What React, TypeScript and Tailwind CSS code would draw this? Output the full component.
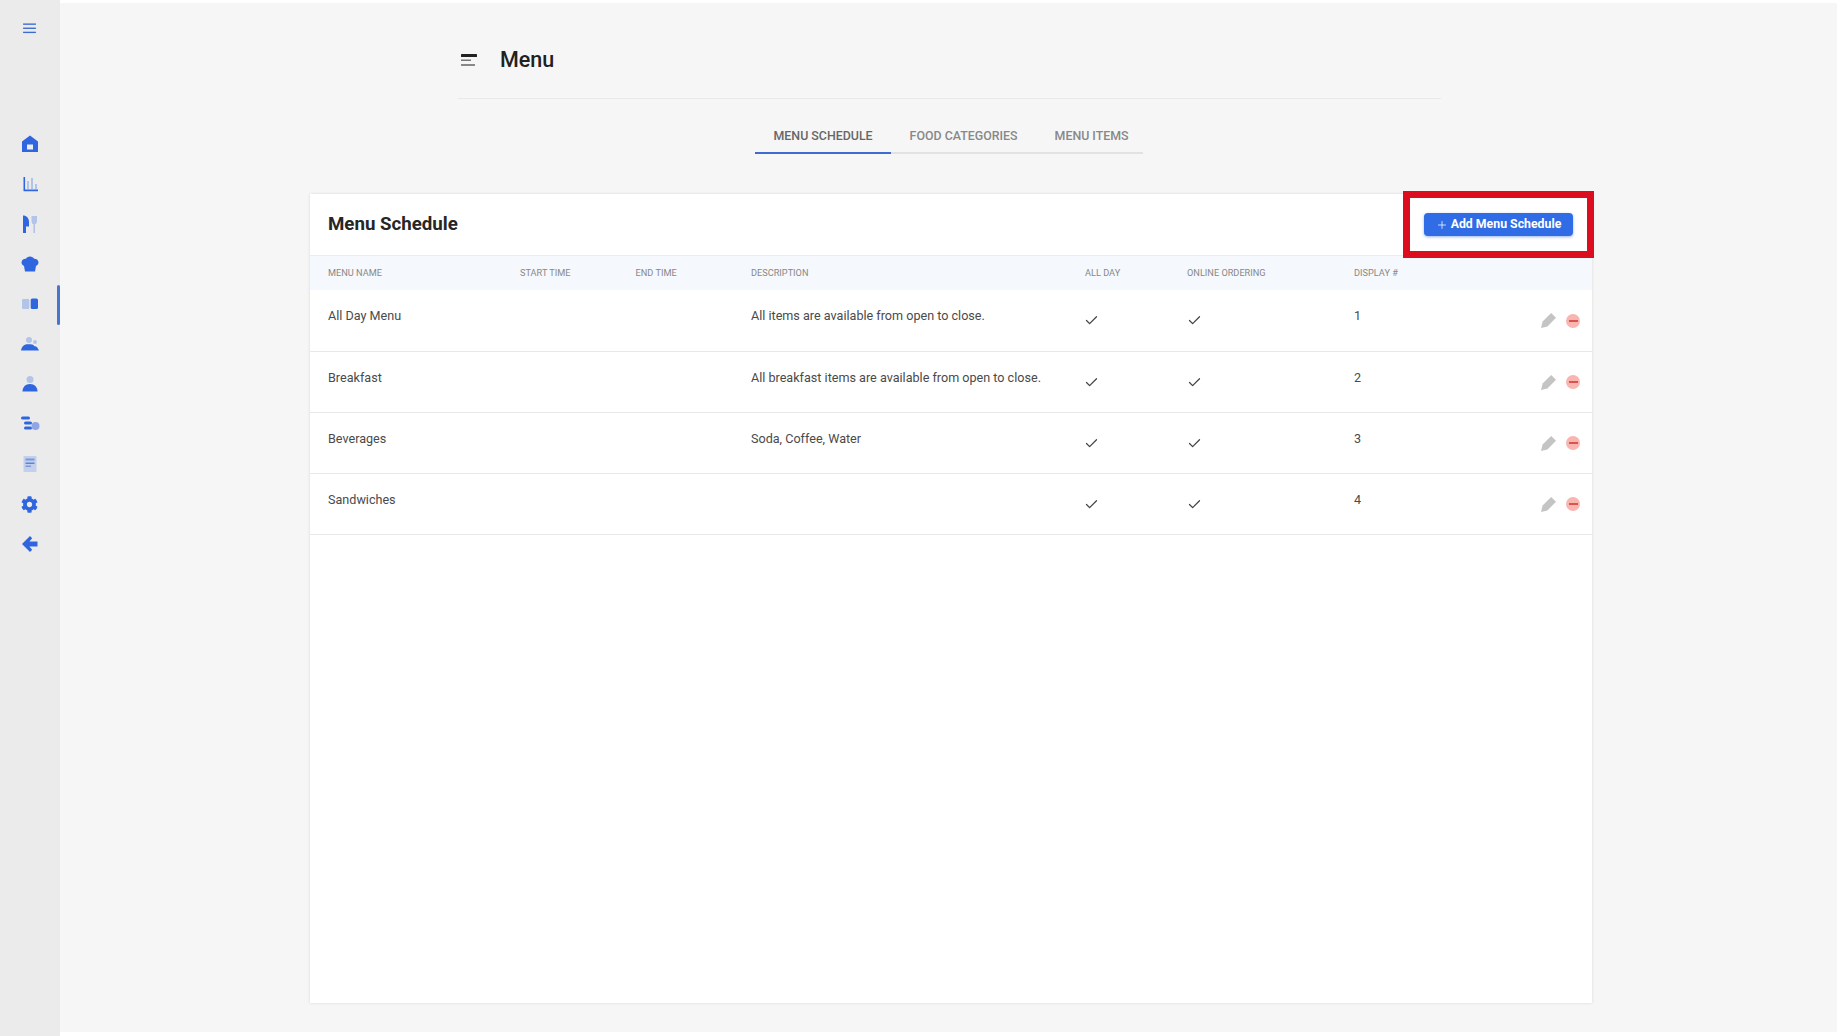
import { Plus, Check } from "lucide-react";
import { FaCog } from "react-icons/fa";

const blue = "#2f66e0";
const pale = "#b4c4e8";

const navIcons = [
  // home
  <svg key="home" viewBox="0 0 20 20" className="h-5 w-5">
    <path fill={blue} d="M10 1.500 2 7.500V18h16V7.500z" />
    <rect x="7" y="10.500" width="6" height="5" fill="#e9edf6" />
  </svg>,
  // chart
  <svg key="chart" viewBox="0 0 20 20" className="h-5 w-5">
    <path fill={pale} d="M7 7h2v8H7zM11 4h2v11h-2zM15 10h2v5h-2z" />
    <path fill={blue} d="M3.500 3h1.600v12.600H18v1.600H3.500z" />
  </svg>,
  // fork and knife
  <svg key="fork" viewBox="0 0 20 20" className="h-5 w-5">
    <path fill={blue} d="M3 1.500c3.500 0 6 2.500 6 6.500v4.500H6V19H3z" />
    <path fill={pale} d="M11.500 2h5.500v5c0 1.800-1 3-2 3.300V19h-1.600v-8.700c-1-.3-1.900-1.500-1.900-3.300z" />
  </svg>,
  // chef hat
  <svg key="hat" viewBox="0 0 20 20" className="h-5 w-5">
    <path fill={blue} d="M10 2.500c2 0 3.400 1 4 2.200 2.400-.2 4.500 1.300 4.500 3.600 0 1.700-1 3-2.500 3.600L15 17.500H5L4 12C2.500 11.300 1.500 10 1.500 8.300 1.500 6 3.600 4.500 6 4.700 6.600 3.500 8 2.500 10 2.500z" />
  </svg>,
  // open menu book
  <svg key="book" viewBox="0 0 20 20" className="h-5 w-5">
    <rect x="2" y="5" width="7.300" height="10" rx="1" fill={pale} />
    <rect x="10.700" y="4.500" width="7.300" height="10.500" rx="1.500" fill={blue} />
  </svg>,
  // group of people
  <svg key="group" viewBox="0 0 20 20" className="h-5 w-5">
    <circle cx="9" cy="6" r="3" fill={pale} />
    <circle cx="15" cy="8" r="2" fill={pale} />
    <path fill={blue} d="M1 16.500c.6-3.600 2.900-6.300 6.500-6.300h3c2 0 3.300.8 4 2 1.800-.4 3.500 1.600 4.500 4.300z" />
  </svg>,
  // person
  <svg key="person" viewBox="0 0 20 20" className="h-5 w-5">
    <circle cx="10" cy="5.500" r="3.500" fill={pale} />
    <path fill={blue} d="M2.500 17.500c0-4.400 3-7.500 7.500-7.500s7.500 3.100 7.500 7.500z" />
  </svg>,
  // list with badge
  <svg key="list" viewBox="0 0 20 20" className="h-5 w-5">
    <rect x="1" y="2.500" width="9" height="3" rx="1.500" fill={blue} />
    <rect x="4" y="7.500" width="8" height="3" rx="1.500" fill={blue} />
    <rect x="4" y="12.500" width="8" height="3" rx="1.500" fill={blue} />
    <circle cx="15.500" cy="12" r="4" fill="#8ea6e4" />
  </svg>,
  // document
  <svg key="doc" viewBox="0 0 20 20" className="h-5 w-5">
    <rect x="3.500" y="2" width="13" height="16" rx="1" fill="#c3d0ec" />
    <rect x="5.500" y="4.500" width="9" height="2" fill="#7d97d8" />
    <rect x="5.500" y="8.500" width="9" height="1.500" fill="#5f82d6" />
    <rect x="5.500" y="11.500" width="5.500" height="1.500" fill="#7d97d8" />
  </svg>,
  // gear
  <FaCog key="gear" className="h-[17px] w-[17px] text-[#2f66e0]" />,
  // back arrow
  <svg key="back" viewBox="0 0 20 20" className="h-5 w-5">
    <path fill={blue} d="M10 2 2 10l8 8 2.200-2.200-2.800-3.300h8.100v-5H9.400l2.800-3.300z" />
  </svg>,
];

const rows = [
  { name: "All Day Menu", description: "All items are available from open to close.", display: 1 },
  { name: "Breakfast", description: "All breakfast items are available from open to close.", display: 2 },
  { name: "Beverages", description: "Soda, Coffee, Water", display: 3 },
  { name: "Sandwiches", description: "", display: 4 },
];

const headers = ["Menu Name", "Start Time", "End Time", "Description", "All Day", "Online Ordering", "Display #", ""];

export default function App() {
  return (
    <div className="flex h-[1036px] w-[1840px] overflow-hidden bg-white font-['Roboto',sans-serif]">
      <aside className="flex h-full w-[60px] shrink-0 flex-col items-center bg-[#ebebeb] pr-[1px]">
        <button className="mt-[18px] mb-[86px] flex h-5 w-5 items-center justify-center">
          <svg viewBox="0 0 14 12" className="h-[11px] w-[13px]" fill="#3d6bd1">
            <rect y="0.500" width="14" height="1.500" />
            <rect y="5" width="14" height="1.500" />
            <rect y="9.500" width="14" height="1.500" />
          </svg>
        </button>
        {navIcons.map((icon, i) => (
          <div key={i} className="relative flex h-10 w-full items-center justify-center">
            {icon}
            {i === 4 && <span className="absolute top-[1px] -right-[1px] h-10 w-[3px] rounded-full bg-[#4a74d0]" />}
          </div>
        ))}
      </aside>

      <main className="mt-[3px] mr-[3px] mb-[4px] flex-1 bg-[#f6f6f6]">
        <div className="ml-[398px] flex h-[96px] w-[983px] items-center border-b border-[#e9e9e9] pt-[20px]">
          <svg viewBox="0 0 16 14" className="ml-[3px] h-[14px] w-4">
            <rect width="16" height="3" rx="0.500" fill="#222" />
            <rect y="5.500" width="10" height="1.500" fill="#777" />
            <rect y="10" width="14" height="2" fill="#888" />
          </svg>
          <h1 className="ml-[23px] text-[21.500px] font-medium text-[#212121]">Menu</h1>
        </div>

        <div className="mt-[20px] ml-[695px] flex w-[388px] border-b-2 border-[#e2e2e2] text-[12.400px] leading-[20px] font-medium whitespace-nowrap">
          <div className="-mb-[2px] border-b-2 border-[#3d6bd1] px-[18.500px] pt-[7px] pb-[6px] text-[#666]">MENU SCHEDULE</div>
          <div className="px-[18.500px] pt-[7px] pb-[6px] text-[#888]">FOOD CATEGORIES</div>
          <div className="px-[18.500px] pt-[7px] pb-[6px] text-[#888]">MENU ITEMS</div>
        </div>

        <section className="relative mt-[40px] ml-[250px] h-[809px] w-[1282px] bg-white shadow-[0_0_3px_rgba(0,0,0,0.12)]">
          <div className="flex h-[62px] items-center justify-between border-b border-[#e9edf2] pr-[19px] pl-[18px]">
            <h2 className="text-[18.700px] font-bold text-[#262626]">Menu Schedule</h2>
            <button className="flex h-[23px] w-[149px] items-center justify-center gap-[3px] rounded bg-[#2f6ce5] text-[12.300px] font-bold text-white shadow-[0_1px_3px_rgba(47,108,229,0.5)]">
              <Plus className="h-3 w-3" strokeWidth={1.5} />
              Add Menu Schedule
            </button>
          </div>

          <table className="w-full table-fixed border-collapse">
            <colgroup>
              <col className="w-[192px]" />
              <col className="w-[115.5px]" />
              <col className="w-[115.5px]" />
              <col className="w-[334px]" />
              <col className="w-[102px]" />
              <col className="w-[167px]" />
              <col className="w-[120px]" />
              <col />
            </colgroup>
            <thead>
              <tr className="h-[34px] bg-[#f5f8fc]">
                {headers.map((h, i) => (
                  <th key={i} className="pl-[18px] text-left text-[9.200px] font-normal whitespace-nowrap text-[#888] uppercase">
                    {h}
                  </th>
                ))}
              </tr>
            </thead>
            <tbody className="text-[12.600px] text-[#4a4a4a]">
              {rows.map((row) => (
                <tr key={row.name} className="h-[61px] border-b border-[#e8e8e8] align-top">
                  <td className="pt-[17px] pl-[18px]">{row.name}</td>
                  <td className="pl-[18px]"></td>
                  <td className="pl-[18px]"></td>
                  <td className="pt-[17px] pl-[18px] whitespace-nowrap">{row.description}</td>
                  <td className="pt-[23px] pl-[18px]">
                    <Check className="h-[15px] w-[15px] -translate-x-px text-[#444]" strokeWidth={2} />
                  </td>
                  <td className="pt-[23px] pl-[18px]">
                    <Check className="h-[15px] w-[15px] text-[#444]" strokeWidth={2} />
                  </td>
                  <td className="pt-[17px] pl-[18px]">{row.display}</td>
                  <td className="pt-[23px]">
                    <div className="flex items-center justify-end gap-[10px] pr-[12px]">
                      <svg viewBox="0 0 14 14" className="h-[15px] w-[15px]">
                        <path fill="#c4c4c4" d="M9.500 0 14 4.500 6 12.500 0 14l1.500-6z" />
                      </svg>
                      <span className="flex h-[14px] w-[14px] items-center justify-center rounded-full bg-[#f9b5b0]">
                        <span className="h-[2px] w-[9px] bg-[#d8544c]" />
                      </span>
                    </div>
                  </td>
                </tr>
              ))}
            </tbody>
          </table>

          {/* red annotation around the add button */}
          <div className="absolute -top-[3px] -right-[2px] h-[67px] w-[191px] border-[7px] border-[#dc0d1e]" />
        </section>
      </main>
    </div>
  );
}
